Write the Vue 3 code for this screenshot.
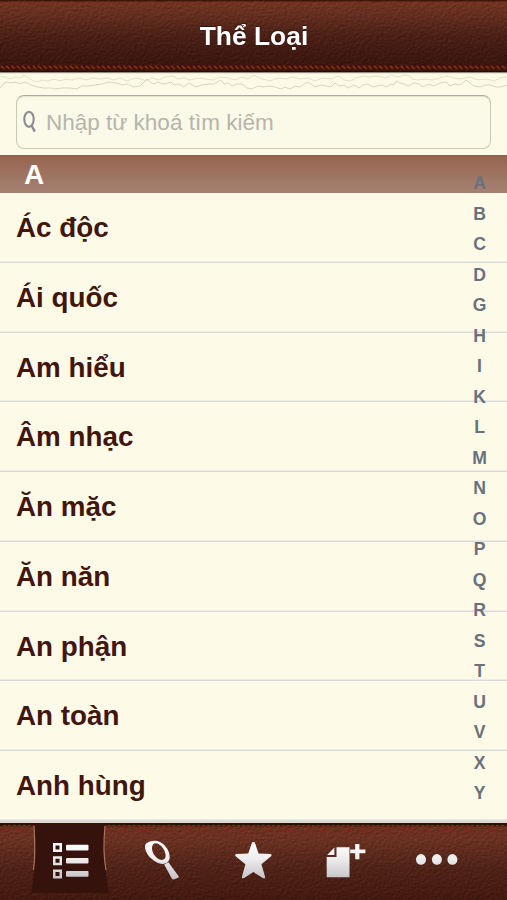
<script setup>
import { ref } from 'vue';

const keyword = ref('');
const activeTab = ref('list');

const categories = [
  'Ác độc',
  'Ái quốc',
  'Am hiểu',
  'Âm nhạc',
  'Ăn mặc',
  'Ăn năn',
  'An phận',
  'An toàn',
  'Anh hùng',
];

const letters = 'ABCDGHIKLMNOPQRSTUVXY'.split('');
const tabs = ['list', 'search', 'star', 'add', 'more'];
</script>

<template>
  <div class="app">
    <!-- shared filters and gradients -->
    <svg class="defs" width="0" height="0">
      <defs>
        <filter id="leather" x="0" y="0" width="100%" height="100%" color-interpolation-filters="sRGB">
          <feTurbulence type="fractalNoise" baseFrequency="0.36 0.46" numOctaves="2" seed="8" result="noise" />
          <feDiffuseLighting in="noise" surfaceScale="1" diffuseConstant="0.7" lighting-color="#ffffff">
            <feDistantLight azimuth="235" elevation="44" />
          </feDiffuseLighting>
        </filter>
        <linearGradient id="silver" gradientUnits="userSpaceOnUse" x1="0" y1="5" x2="0" y2="42">
          <stop offset="0" stop-color="#ffffff" />
          <stop offset="0.45" stop-color="#eeeded" />
          <stop offset="1" stop-color="#c4c2c6" />
        </linearGradient>
        <pattern id="stitch" width="5.33" height="5" patternUnits="userSpaceOnUse">
          <path d="M0.8 0.8L4 3.8" stroke="#a42c12" stroke-width="1.4" />
        </pattern>
      </defs>
    </svg>

    <header class="header">
      <svg class="leather" width="507" height="72">
        <rect width="507" height="72" filter="url(#leather)" />
      </svg>
      <svg class="stitches" width="507" height="5">
        <rect width="507" height="5" fill="url(#stitch)" />
      </svg>
      <h1 class="title">Thể Loại</h1>
    </header>

    <div class="search-area">
      <svg class="torn" width="507" height="23" viewBox="0 72 507 23" fill="none">
        <path
          stroke="#e2e2c4"
          d="M0 76L5 77L10 79L16 77L20 78L24 75L30 79L36 82L42 80L48 81L54 79L60 81L66 79L72 80L79 78L86 80L93 78L100 79L108 78L113 80L120 78L127 81L135 78L141 79L146 81L152 78L159 80L165 77L173 76L178 79L184 78L190 80L198 78L205 79L213 80L220 77L228 78L235 80L242 77L248 79L254 75L262 79L270 81L278 78L286 79L292 77L300 79L308 78L315 81L323 78L331 79L338 76L344 80L350 81L356 78L363 76L370 77L378 76L385 78L392 75L398 77L405 75L410 76L412 79L418 80L425 79L432 80L440 78L447 76L454 78L461 79L470 77L478 80L486 79L494 81L500 78L507 77"
        />
        <path
          stroke="#d7d6bd"
          d="M0 88L3 84L7 82L11 83L15 82L20 84L25 82L31 85L37 87L44 88L51 88L55 89L62 88L70 88L77 89L82 86L88 86L95 85L102 84L109 82L116 83L122 85L128 84L134 87L140 86L145 81L147 79L150 82L154 84L158 82L163 84L168 83L171 82L174 85L179 84L184 87L189 83L196 87L202 85L209 84L214 84L217 82L221 80L224 84L228 83L232 86L237 84L242 84L247 88L252 89L258 86L263 87L269 86L275 87L281 89L285 87L290 89L295 86L300 87L304 84L308 82L311 84L315 87L321 85L326 86L331 87L335 83L339 86L344 85L348 88L354 85L359 88L363 85L368 84L373 87L377 86L382 85L386 87L391 84L394 85L396 81L400 83L404 84L408 86L414 83L419 84L423 87L428 84L434 86L440 83L446 82L450 86L455 84L459 85L463 83L466 80L470 83L474 86L480 87L485 85L490 85L496 87L501 87L507 85"
        />
      </svg>
      <label class="search-box">
        <svg class="search-icon" width="14" height="24" viewBox="0 0 14 24" fill="none" stroke="#8b8c94">
          <ellipse cx="6" cy="9.3" rx="4.7" ry="7.6" stroke-width="2.1" />
          <path d="M8.3 15L11.8 21.6" stroke-width="2.4" />
        </svg>
        <input v-model="keyword" type="text" placeholder="Nhập từ khoá tìm kiếm" />
      </label>
    </div>

    <main class="content">
      <h2 class="section">A</h2>
      <ul class="rows">
        <li v-for="name in categories" :key="name" class="row">{{ name }}</li>
      </ul>
      <nav class="index">
        <span v-for="letter in letters" :key="letter">{{ letter }}</span>
      </nav>
    </main>

    <footer class="tabbar">
      <svg class="leather" width="507" height="77">
        <rect width="507" height="77" filter="url(#leather)" />
      </svg>
      <div
        v-for="tab in tabs"
        :key="tab"
        :class="['tab', { active: tab === activeTab }]"
        @click="activeTab = tab"
      >
        <svg v-if="tab === activeTab" class="pocket" width="82" height="72" viewBox="0 0 82 72">
          <path d="M5 0H76C74 25 76 50 80 70H2C6 50 7 25 5 0Z" fill="#35120b" />
          <path d="M5 3C6 18 6 36 4.5 47M76 3C74.5 18 75 36 77 47" fill="none" stroke="#a8735a" stroke-width="1.2" />
        </svg>
        <svg class="icon" width="48" height="48" viewBox="0 0 48 48" fill="url(#silver)">
          <template v-if="tab === 'list'">
            <path
              fill-rule="evenodd"
              d="M7 6h9v9h-9zM9.5 8.5v4h4v-4zM7 19.3h9v9h-9zM9.5 21.8v4h4v-4zM7 32.5h9v9h-9zM9.5 35v4h4v-4z"
            />
            <rect x="20" y="7.8" width="22.5" height="5.6" rx="1" />
            <rect x="20" y="21" width="22.5" height="5.6" rx="1" />
            <rect x="20" y="34.1" width="22.5" height="5.6" rx="1" />
          </template>
          <template v-else-if="tab === 'search'">
            <path
              fill-rule="evenodd"
              d="M15 4C23 2.5 32 11.5 31.7 20.5C31.4 26.5 25 28.5 19 25.5C12 22 7 15.5 7 9.5C7 6 11 4.5 15 4ZM16.5 6.4C12.8 8 13.5 14 16.7 18.6C19.5 22.5 24.2 24.3 26.8 21.6C29 19 26.7 12.5 23.2 9C21 6.6 18.5 5.6 16.5 6.4Z"
            />
            <path d="M26.2 27.6L30.4 25.3L40.8 39.4Q41 40.8 39.5 41.1L35.5 42.4Q34.2 42.5 33.5 41Z" />
          </template>
          <path
            v-else-if="tab === 'star'"
            d="M24.4 5Q25.7 5 26.2 6.4L29.5 16.6L41.2 17Q43.6 17.4 41.8 19.4L32.4 27.3L36 39.5Q36.2 42.4 33.8 41L24.4 35L15.2 41Q12.7 42.4 13 39.4L16.4 27.3L6.9 19.6Q5.2 17.5 7.3 17L19.2 16.6L22.7 6.4Q23.2 5 24.4 5Z"
          />
          <template v-else-if="tab === 'add'">
            <path d="M15.5 10.2H28.5V40.3H5.7V20H15.5Z" />
            <path d="M13.4 10.5V18H6.2Z" />
            <path d="M34.2 7h4.2v5.6h6v3.6h-6v6h-4.2v-6h-5v-3.6h5z" />
          </template>
          <template v-else>
            <ellipse cx="8" cy="22.4" rx="5" ry="5.3" />
            <ellipse cx="23.9" cy="22.4" rx="5" ry="5.3" />
            <ellipse cx="39.4" cy="22.4" rx="5" ry="5.3" />
          </template>
        </svg>
      </div>
    </footer>
  </div>
</template>

<style>
body {
  margin: 0;
  background: #fefae8;
}
</style>

<style scoped>
.app {
  display: flex;
  flex-direction: column;
  width: 507px;
  height: 900px;
  overflow: hidden;
  background: #fefae8;
  font-family: "Liberation Sans", Arial, sans-serif;
}

.defs {
  position: absolute;
}

/* Header */
.header {
  position: relative;
  flex: none;
  height: 72px;
  box-sizing: border-box;
  border-bottom: 1px solid #250c07;
  background: linear-gradient(#421609 0, #421609 1px, #743420 2px, #663021 14px, #4b2016 36px, #3d170f 60px, #3b150d 100%);
  box-shadow: 0 1px 1px #8f8b7d;
  isolation: isolate;
  z-index: 1;
}

.leather {
  position: absolute;
  inset: 0;
  mix-blend-mode: soft-light;
  opacity: 0.5;
}

.stitches {
  position: absolute;
  left: 0;
  bottom: 1px;
}

.title {
  position: relative;
  margin: 0;
  padding-left: 1px;
  text-align: center;
  color: #fff;
  font-size: 26.4px;
  line-height: 72px;
  text-shadow: 0 -1px 1px rgba(0, 0, 0, 0.5);
}

/* Search */
.search-area {
  display: flex;
  flex-direction: column;
  flex: none;
  height: 83px;
}

.torn {
  flex: none;
}

.search-box {
  display: flex;
  align-items: center;
  height: 54px;
  margin: 0 16px;
  padding-left: 6px;
  box-sizing: border-box;
  border: 1px solid #cbcab8;
  border-top-color: #aeada0;
  border-radius: 8px;
  background: #fbf9e7;
  box-shadow: inset 0 1px 1px rgba(110, 110, 80, 0.18);
}

.search-icon {
  flex: none;
  margin-right: 9px;
}

.search-box input {
  flex: 1;
  padding: 2px 0 0;
  border: none;
  outline: none;
  background: none;
  color: #3f150d;
  font-family: inherit;
  font-size: 22.5px;
}

.search-box input::placeholder {
  color: #b6b5ab;
  opacity: 1;
}

/* List */
.content {
  position: relative;
  flex: 1;
  min-height: 0;
}

.section {
  height: 38px;
  margin: 0;
  padding-left: 24px;
  box-sizing: border-box;
  border-top: 1px solid #8d604c;
  background: linear-gradient(#966650, #a58172);
  color: #fff;
  font-size: 28px;
  line-height: 37px;
}

.rows {
  margin: 0;
  padding: 0;
  list-style: none;
}

.row {
  height: 69.75px;
  padding-left: 16px;
  box-sizing: border-box;
  border-bottom: 1px solid #d8d9da;
  box-shadow: inset 0 -1px #eeece2;
  color: #42160d;
  font-size: 27.8px;
  font-weight: bold;
  line-height: 69.5px;
}

.index {
  position: absolute;
  top: 13px;
  right: 17px;
  display: flex;
  flex-direction: column;
  width: 21px;
  text-align: center;
  color: #69717a;
  font-size: 17.6px;
  font-weight: bold;
}

.index span {
  height: 30.5px;
  line-height: 30.5px;
}

/* Tab bar */
.tabbar {
  position: relative;
  display: flex;
  flex: none;
  height: 77px;
  padding: 0 24px;
  box-sizing: border-box;
  background: linear-gradient(#30100a 0, #30100a 2px, #70301e 4px, #6b3222 16px, #502318 45px, #43190f 100%);
  box-shadow: 0 -2px 1px #dedbd0;
  isolation: isolate;
}

.tabbar::after {
  content: "";
  position: absolute;
  top: 2px;
  left: 3px;
  right: 3px;
  border-top: 1px dashed #a01f10;
}

.tab {
  position: relative;
  display: flex;
  flex: 1;
  justify-content: center;
  padding-top: 14px;
  box-sizing: border-box;
}

.pocket {
  position: absolute;
  top: 0;
  left: 5px;
  z-index: 1;
}

.icon {
  position: relative;
  z-index: 2;
}
</style>
